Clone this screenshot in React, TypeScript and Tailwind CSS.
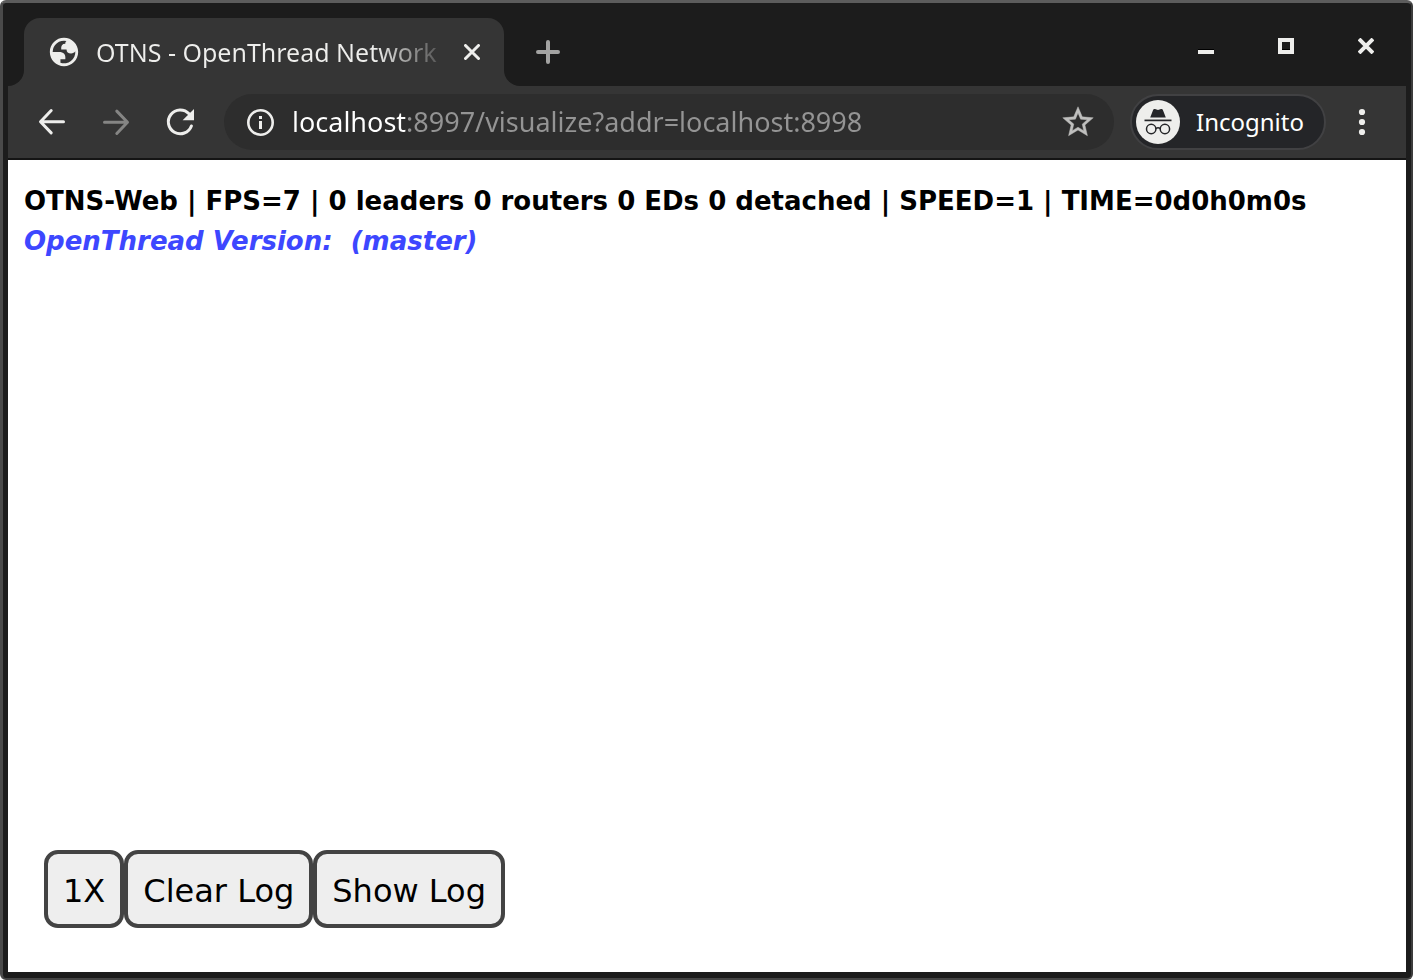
import React from "react";

type IconProps = { className?: string };

const GlobeIcon = ({ className }: IconProps) => (
  <svg viewBox="0 0 24 24" className={className} fill="currentColor" fillRule="evenodd" aria-hidden="true">
    <path d="M12 2c5.52 0 10 4.48 10 10s-4.48 10-10 10S2 17.52 2 12 6.48 2 12 2zM4 12h4.4c3.407.022 4.922 1.73 4.543 5.127H9.488v2.47a8.004 8.004 0 0 0 10.498-8.083C19.327 12.504 18.332 13 17 13c-2.137 0-3.206-.916-3.206-2.75h-3.748c-.274-2.728.683-4.092 2.87-4.092 0-.975.327-1.597.811-1.97A8.004 8.004 0 0 0 4 12z" />
  </svg>
);

const ArrowIcon = ({ className }: IconProps) => (
  <svg viewBox="0 0 32 32" className={className} fill="none" stroke="currentColor" strokeWidth="3" strokeLinecap="round" strokeLinejoin="round" aria-hidden="true">
    <path d="M27.5 15.7H5M15.2 4.5L4.5 15.7l10.7 11.2" />
  </svg>
);

const ReloadIcon = ({ className }: IconProps) => (
  <svg viewBox="0 0 32 32" className={className} fill="none" aria-hidden="true">
    <path d="M27.4 20A11.9 11.9 0 1 1 25 7.8" stroke="currentColor" strokeWidth="3" strokeLinecap="round" />
    <path d="M30 3v11.2H18.6z" fill="currentColor" />
  </svg>
);

const InfoIcon = ({ className }: IconProps) => (
  <svg viewBox="0 0 28 28" className={className} fill="none" aria-hidden="true">
    <circle cx="14.5" cy="14.5" r="12.2" stroke="currentColor" strokeWidth="2.6" />
    <path d="M13 8h3v3h-3zM13 13h3v8h-3z" fill="currentColor" />
  </svg>
);

const StarIcon = ({ className }: IconProps) => (
  <svg viewBox="1.5 1.5 21 21" className={className} fill="currentColor" stroke="currentColor" strokeWidth="0.3" aria-hidden="true">
    <path d="M22 9.24l-7.19-.62L12 2 9.19 8.63 2 9.24l5.46 4.73L5.82 21 12 17.27 18.18 21l-1.63-7.03L22 9.24zM12 15.4l-3.76 2.27 1-4.28-3.32-2.88 4.38-.38L12 6.1l1.71 4.04 4.38.38-3.32 2.88 1 4.28L12 15.4z" />
  </svg>
);

const IncognitoIcon = ({ className }: IconProps) => (
  <svg viewBox="0 0 44 44" className={className} aria-hidden="true">
    <circle cx="22" cy="22" r="22" fill="#eeeeec" />
    <path d="M14.2 17.4l3-7.6c.3-.8 1-1.1 1.8-.8l3 .9 3-.9c.8-.3 1.5 0 1.8.8l3 7.6z" fill="#242528" />
    <path d="M8.5 20.4h27" stroke="#242528" strokeWidth="1.7" />
    <g fill="none" stroke="#242528" strokeWidth="1.5">
      <circle cx="15.2" cy="29" r="4.7" />
      <circle cx="28.9" cy="29" r="4.7" />
      <path d="M19.8 28.6c1.3-.9 3.2-.9 4.5 0" />
    </g>
  </svg>
);

function TabStrip() {
  return (
    <header className="flex h-[82px] bg-[#1c1c1c]">
      <div className="w-4 bg-[#353535]">
        <div className="h-full rounded-br-2xl bg-[#1c1c1c]" />
      </div>
      <div className="flex w-[480px] shrink-0 pt-[14px]">
        <div className="flex flex-1 items-center rounded-t-2xl bg-[#353535] pl-[23px] pr-[18px]">
          <GlobeIcon className="size-[34px] shrink-0 text-[#eeeeec]" />
          <span className="ml-[15px] whitespace-nowrap bg-linear-to-r from-[#eeeeec] from-82% to-[#5a5a5a] bg-clip-text text-[25px] leading-9 text-transparent">
            OTNS - OpenThread Network
          </span>
          <button type="button" aria-label="Close tab" className="ml-auto flex size-7 shrink-0 items-center justify-center text-[#eeeeec]">
            <svg viewBox="0 0 16 16" className="size-4" stroke="currentColor" strokeWidth="3" strokeLinecap="round" aria-hidden="true">
              <path d="M1.5 1.5l13 13M14.5 1.5l-13 13" />
            </svg>
          </button>
        </div>
      </div>
      <div className="flex-1 bg-[#353535]">
        <div className="flex h-full items-start justify-between rounded-bl-2xl bg-[#1c1c1c]">
          <button type="button" aria-label="New tab" className="ml-6 mt-7 flex size-10 items-center justify-center text-[#a3a3a2]">
            <svg viewBox="0 0 24 24" className="size-6" stroke="currentColor" strokeWidth="4" strokeLinecap="round" aria-hidden="true">
              <path d="M12 2v20M2 12h20" />
            </svg>
          </button>
          <div className="mr-5 mt-[22px] flex gap-10 text-[#eeeeec]">
            <button type="button" aria-label="Minimize" className="flex size-10 items-center justify-center">
              <svg viewBox="0 0 16 16" className="size-4" aria-hidden="true">
                <path d="M0 11h16v1H0z" fill="#000" />
                <path d="M0 12h16v4H0z" fill="currentColor" />
              </svg>
            </button>
            <button type="button" aria-label="Maximize" className="flex size-10 items-center justify-center">
              <svg viewBox="0 0 16 16" className="size-4" aria-hidden="true">
                <path d="M2 2h12v12H2z" fill="none" stroke="currentColor" strokeWidth="4" />
                <path d="M4 11h8v1H4z" fill="#000" />
              </svg>
            </button>
            <button type="button" aria-label="Close window" className="flex size-10 items-center justify-center">
              <svg viewBox="0 0 16 16" className="size-4" stroke="currentColor" strokeWidth="4" aria-hidden="true">
                <path d="M1 1l14 14M15 1L1 15" />
              </svg>
            </button>
          </div>
        </div>
      </div>
    </header>
  );
}

function Toolbar() {
  return (
    <nav aria-label="Navigation" className="flex h-[74px] items-center border-b-2 border-[#141414] bg-[#353535] pl-7 pr-7 text-[#eeeeec]">
      <div className="flex gap-8">
        <button type="button" aria-label="Back" className="size-8">
          <ArrowIcon className="size-8" />
        </button>
        <button type="button" aria-label="Forward" className="size-8 text-[#858584]">
          <ArrowIcon className="size-8 rotate-180" />
        </button>
        <button type="button" aria-label="Reload" className="size-8">
          <ReloadIcon className="size-8" />
        </button>
      </div>
      <div className="ml-7 flex h-14 flex-1 items-center rounded-full bg-[#2d2d2d] pl-[22px] pr-5">
        <button type="button" aria-label="Site information" className="size-7 shrink-0">
          <InfoIcon className="size-7" />
        </button>
        <input
          type="text"
          aria-label="Address"
          defaultValue="localhost:8997/visualize?addr=localhost:8998"
          className="ml-[18px] min-w-0 flex-1 bg-[linear-gradient(90deg,#ffffff_115px,#949494_115px)] bg-clip-text text-[27px] leading-9 text-transparent caret-white outline-none"
        />
        <button type="button" aria-label="Bookmark this page" className="size-8 shrink-0 text-[#bfbfbe]">
          <StarIcon className="size-8" />
        </button>
      </div>
      <button type="button" className="ml-4 flex h-14 items-center rounded-full border-2 border-[#414143] bg-[#242528] pl-1 pr-5 text-[24px] leading-9 text-white">
        <IncognitoIcon className="mr-4 size-11" />
        Incognito
      </button>
      <button type="button" aria-label="Menu" className="ml-5 flex size-8 items-center justify-center">
        <svg viewBox="0 0 8 28" className="h-7 w-2" fill="currentColor" aria-hidden="true">
          <circle cx="4" cy="4" r="3.1" />
          <circle cx="4" cy="14" r="3.1" />
          <circle cx="4" cy="24" r="3.1" />
        </svg>
      </button>
    </nav>
  );
}

const actions = ["1X", "Clear Log", "Show Log"];

export default function App() {
  return (
    <div className="flex min-h-screen flex-col rounded-md border-b-2 border-l-[3px] border-r-2 border-t-[3px] border-b-[#444444] border-l-[#4a4a4a] border-r-[#3c3c3c] border-t-[#5c5c5c] bg-[#1c1c1c] font-['Noto_Sans',sans-serif]">
      <div className="flex flex-1 flex-col pb-[6px] pl-[5px] pr-[5px] pt-px">
        <TabStrip />
        <Toolbar />
        <main className="flex flex-1 flex-col justify-between bg-white pb-11 pl-4 pr-4 pt-[21px] font-['Verdana','DejaVu_Sans',sans-serif]">
          <div className="whitespace-nowrap text-[26px] font-bold leading-10">
            <h1>OTNS-Web | FPS=7 | 0 leaders 0 routers 0 EDs 0 detached | SPEED=1 | TIME=0d0h0m0s</h1>
            <p className="italic text-[#3d47ff]">OpenThread Version: &nbsp;(master)</p>
          </div>
          <div className="ml-5 flex">
            {actions.map((label) => (
              <button
                key={label}
                type="button"
                className="h-[78px] rounded-[14px] border-4 border-[#434343] bg-[#eeeeee] px-[15px] pt-[3px] text-[32px] leading-10 text-black"
              >
                {label}
              </button>
            ))}
          </div>
        </main>
      </div>
    </div>
  );
}
